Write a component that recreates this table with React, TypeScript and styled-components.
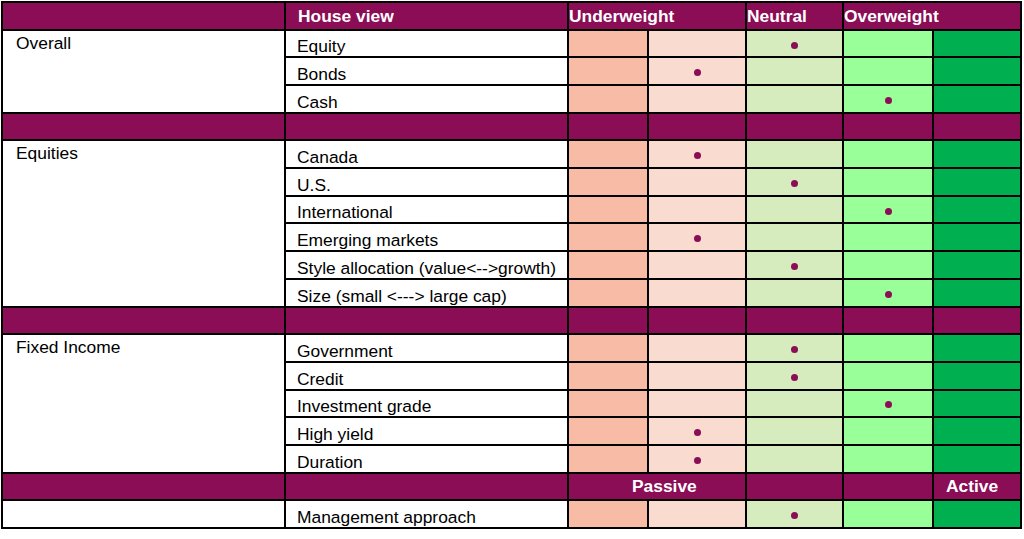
import React from "react";
import styled, { createGlobalStyle } from "styled-components";

const Global = createGlobalStyle`
  html, body { margin: 0; padding: 0; background: #ffffff; }
  body { font-family: "Liberation Sans", Arial, sans-serif; }
`;

const PURPLE = "#8a0d55";
const SHADES = ["#f8bba6", "#fadbd0", "#d6ecbf", "#99ff99", "#00b050"];

const Table = styled.div`
  margin: 1px 0 0 1px;
  width: 1021px;
  height: 528px;
  box-sizing: border-box;
  padding: 2px;
  gap: 2px;
  background: #000;
  display: grid;
  grid-template-columns: 281px 281px 78px 96px 95px 88px 86px;
  grid-template-rows: repeat(19, 1fr);
`;

const HeadCell = styled.div<{ $span?: number; $pad?: number }>`
  grid-column: span ${(p) => p.$span ?? 1};
  background: ${PURPLE};
  color: #fff;
  font-weight: bold;
  font-size: 17.4px;
  line-height: 20px;
  display: flex;
  align-items: flex-end;
  padding: 0 0 3px ${(p) => p.$pad ?? 0}px;
  white-space: nowrap;
  min-width: 0;
`;

const GroupLabel = styled.div<{ $rows: number }>`
  grid-row: span ${(p) => p.$rows};
  background: #fff;
  color: #000;
  font-size: 17.4px;
  line-height: 20px;
  padding: 2px 0 0 13px;
`;

const ItemCell = styled.div`
  background: #fff;
  color: #000;
  font-size: 17.4px;
  line-height: 20px;
  display: flex;
  align-items: flex-end;
  padding-left: 11px;
  white-space: nowrap;
`;

const Shade = styled.div<{ $level: number }>`
  background: ${(p) => SHADES[p.$level]};
  display: flex;
  align-items: center;
  justify-content: center;
  padding-top: 3px;
`;

const Dot = styled.span`
  width: 7px;
  height: 7px;
  border-radius: 50%;
  background: ${PURPLE};
`;

type Item = [string, number];
type Section = { label: string; items: Item[] };

const sections: Section[] = [
  {
    label: "Overall",
    items: [
      ["Equity", 2],
      ["Bonds", 1],
      ["Cash", 3],
    ],
  },
  {
    label: "Equities",
    items: [
      ["Canada", 1],
      ["U.S.", 2],
      ["International", 3],
      ["Emerging markets", 1],
      ["Style allocation (value<-->growth)", 2],
      ["Size (small <---> large cap)", 3],
    ],
  },
  {
    label: "Fixed Income",
    items: [
      ["Government", 2],
      ["Credit", 2],
      ["Investment grade", 3],
      ["High yield", 1],
      ["Duration", 1],
    ],
  },
];

const Row = ({ name, pick }: { name: string; pick: number }) => (
  <>
    <ItemCell>{name}</ItemCell>
    {SHADES.map((_, i) => (
      <Shade key={i} $level={i}>
        {i === pick && <Dot />}
      </Shade>
    ))}
  </>
);

const Separator = () => (
  <>
    {Array.from({ length: 7 }).map((_, i) => (
      <HeadCell key={i} />
    ))}
  </>
);

export default function App() {
  return (
    <>
      <Global />
      <Table>
        <HeadCell />
        <HeadCell $pad={12}>House view</HeadCell>
        <HeadCell $span={2}>Underweight</HeadCell>
        <HeadCell>Neutral</HeadCell>
        <HeadCell $span={2}>Overweight</HeadCell>

        {sections.map((s, si) => (
          <React.Fragment key={s.label}>
            {si > 0 && <Separator />}
            <GroupLabel $rows={s.items.length}>{s.label}</GroupLabel>
            {s.items.map(([name, pick]) => (
              <Row key={name} name={name} pick={pick} />
            ))}
          </React.Fragment>
        ))}

        <HeadCell />
        <HeadCell />
        <HeadCell $span={2} $pad={63}>Passive</HeadCell>
        <HeadCell />
        <HeadCell />
        <HeadCell $pad={12}>Active</HeadCell>

        <GroupLabel $rows={1} />
        <Row name="Management approach" pick={2} />
      </Table>
    </>
  );
}
